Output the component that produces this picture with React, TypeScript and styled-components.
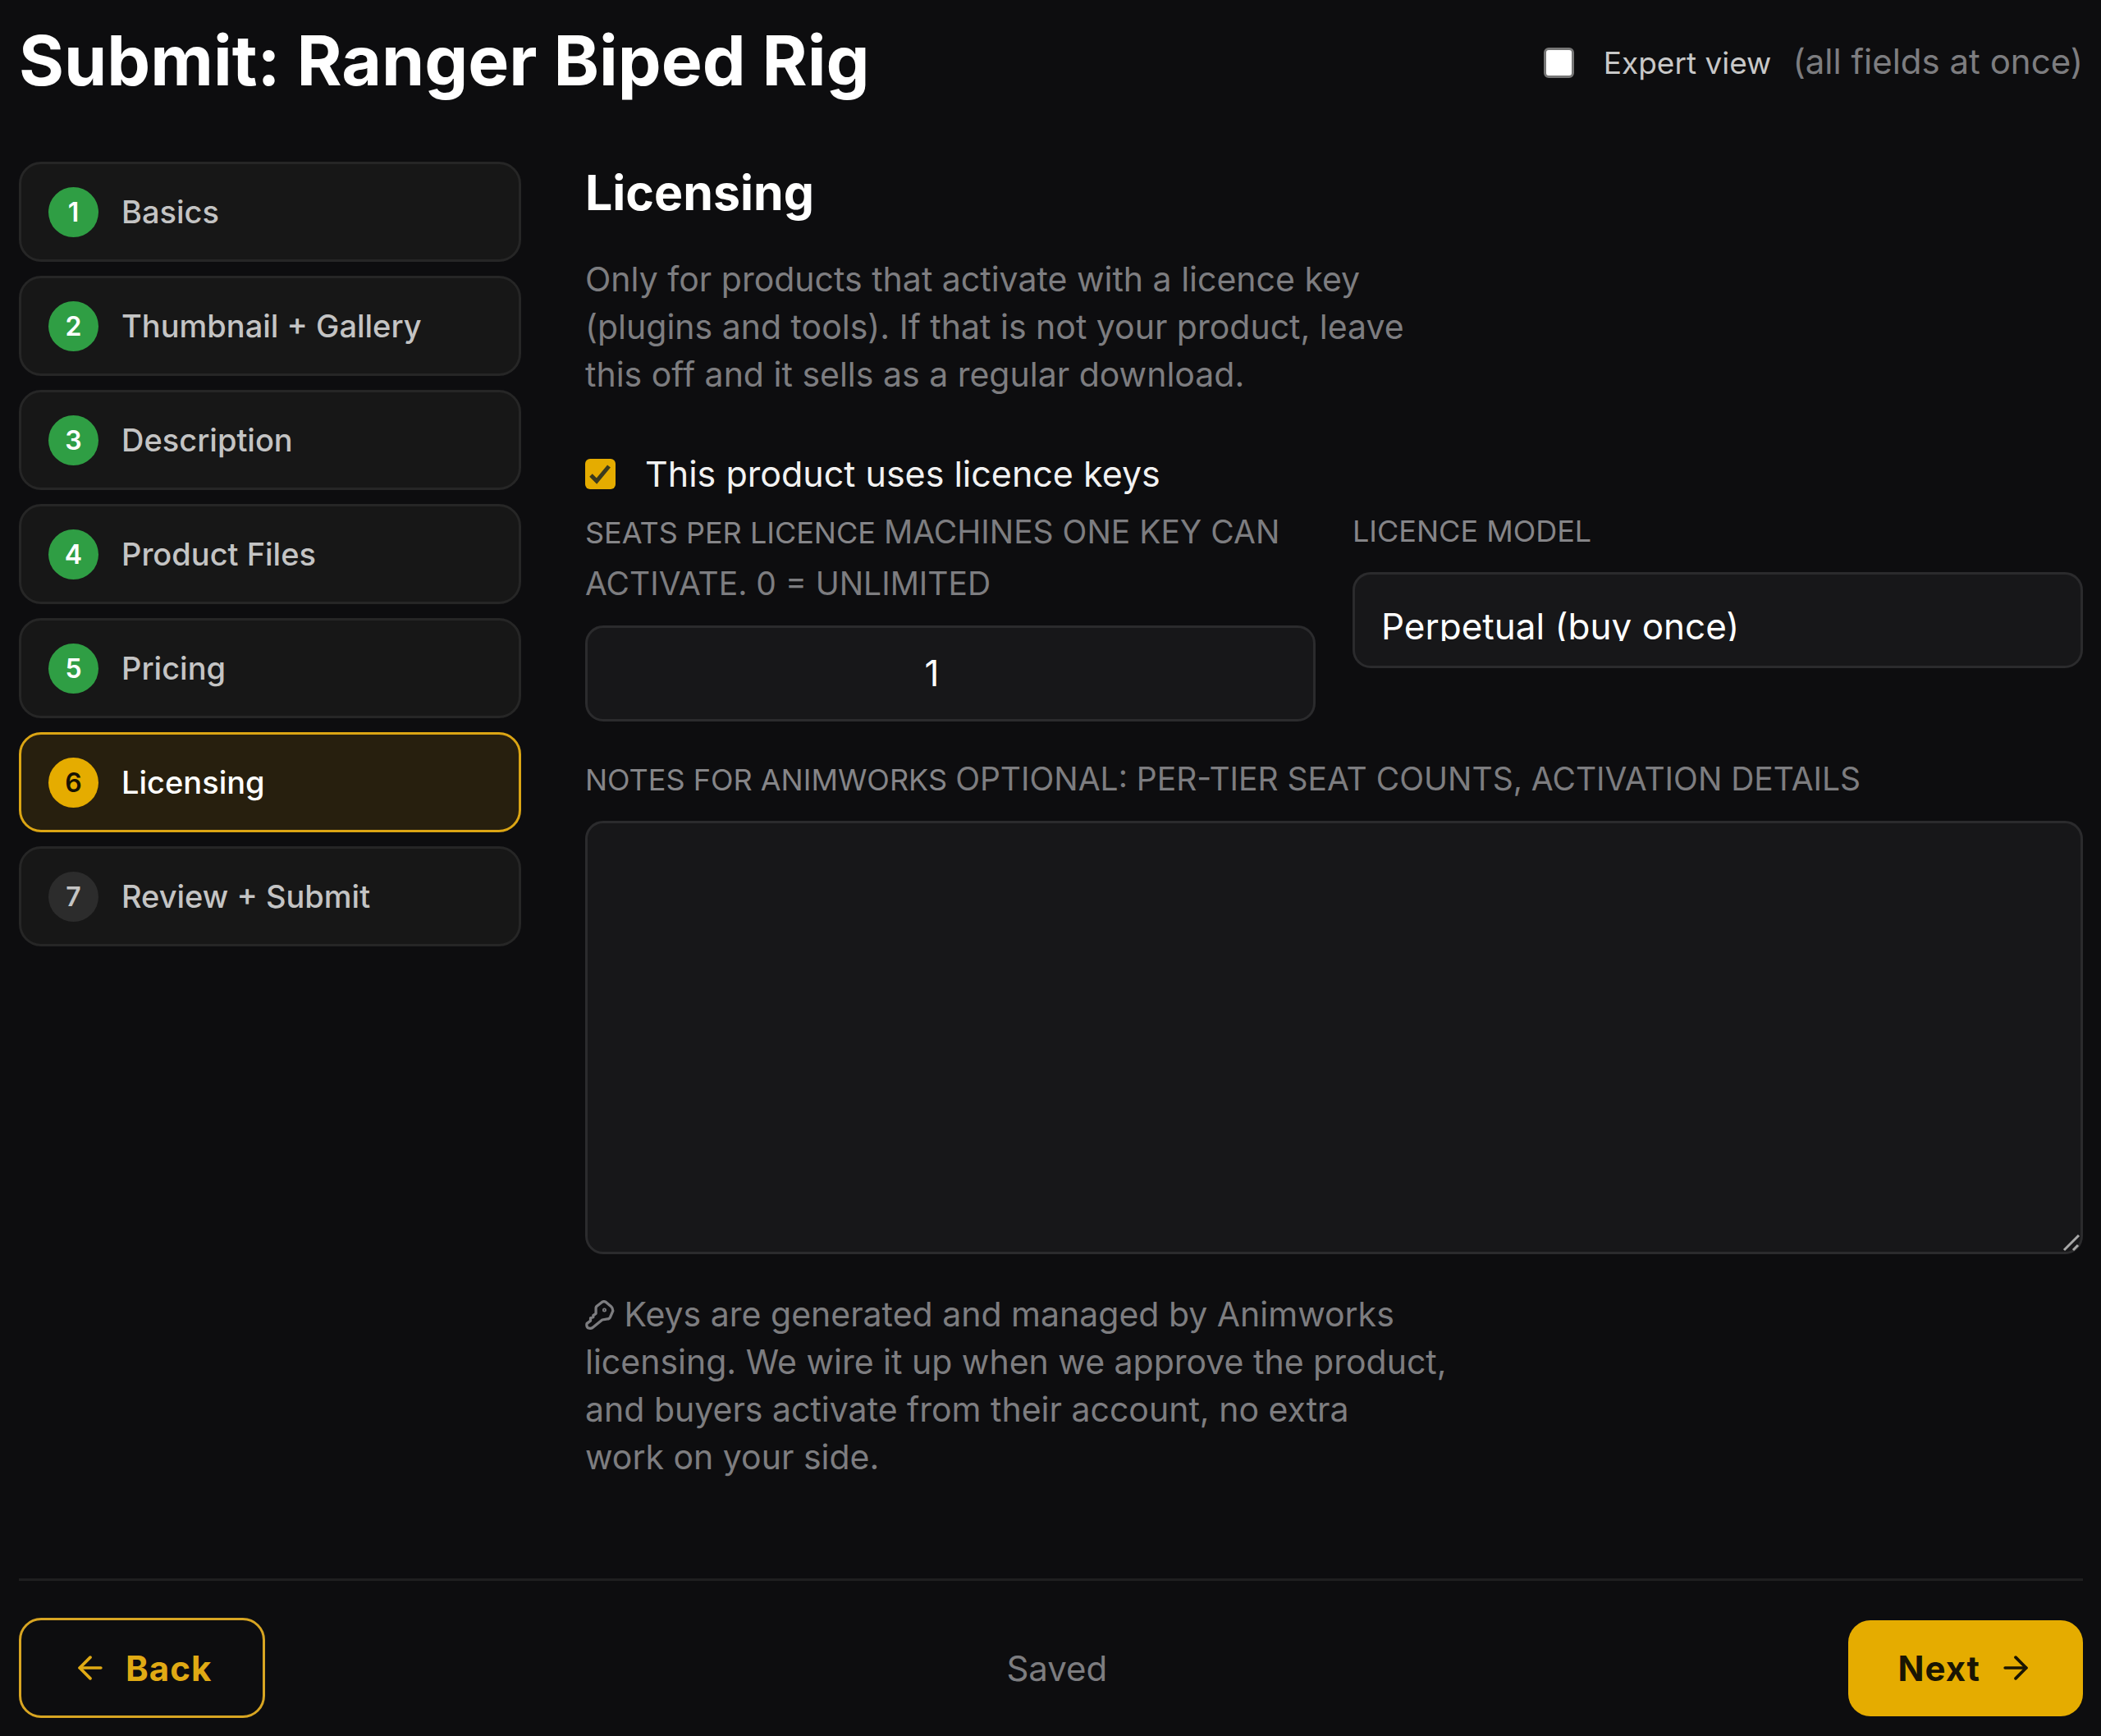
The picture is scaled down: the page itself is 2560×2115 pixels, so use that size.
import React, { useState } from "react";
import styled, { createGlobalStyle } from "styled-components";
import { ArrowLeft, ArrowRight } from "lucide-react";

const GlobalStyle = createGlobalStyle`
  *, *::before, *::after { box-sizing: border-box; }
  body {
    margin: 0;
    background: #0d0d0f;
    color: #ffffff;
    font-family: Inter, "Open Sans", "Noto Sans", sans-serif;
  }
  h1, h2, p, ol { margin: 0; padding: 0; }
  button, input, select, textarea { font-family: inherit; }
`;

const Page = styled.div`
  padding: 26px 22px 16px 23px;
`;

const Header = styled.header`
  display: flex;
  justify-content: space-between;
  align-items: center;
  height: 100px;
  margin-bottom: 71px;
`;

const Title = styled.h1`
  font-size: 84px;
  line-height: 96px;
  padding-bottom: 4px;
  font-weight: 700;
`;

const tick = `url("data:image/svg+xml,%3Csvg xmlns='http://www.w3.org/2000/svg' viewBox='0 0 37 37' fill='none' stroke='%233b3a1e' stroke-width='5'%3E%3Cpath d='M7 20l7 7L29 9'/%3E%3C/svg%3E")`;

const Check = styled.input`
  appearance: none;
  width: 37px;
  height: 37px;
  margin: 0;
  flex: none;
  border: 3px solid #767676;
  border-radius: 6px;
  background: #ffffff;

  &:checked {
    border: 0;
    background: #e5ac00 ${tick} center / 100% no-repeat;
  }
`;

const ExpertToggle = styled.label`
  display: flex;
  align-items: center;
  font-size: 37px;
  line-height: 60px;
  color: #c8c8c8;
  gap: 36px;
`;

const ExpertText = styled.span`
  display: flex;
  align-items: baseline;
  gap: 26px;
`;

const Muted = styled.span`
  font-size: 42px;
  color: #7d7d80;
`;

const Columns = styled.div`
  display: grid;
  grid-template-columns: 612px minmax(0, 1fr);
  column-gap: 78px;
`;

const Steps = styled.ol`
  list-style: none;
  display: flex;
  flex-direction: column;
  gap: 17px;
`;

const StepButton = styled.button<{ $current: boolean }>`
  display: flex;
  align-items: center;
  gap: 28px;
  width: 100%;
  height: 122px;
  padding: 0 33px;
  border: 3px solid ${(p) => (p.$current ? "#dba514" : "#262626")};
  border-radius: 27px;
  background: ${(p) => (p.$current ? "#271f0e" : "#171717")};
  color: ${(p) => (p.$current ? "#ffffff" : "#c4c4c4")};
  font-size: 38px;
  font-weight: 500;
  text-align: left;
`;

const badgeColors = {
  done: ["#2f9e44", "#ffffff"],
  current: ["#e5ac00", "#171203"],
  todo: ["#2c2c2c", "#c4c4c4"],
};

const StepBadge = styled.span<{ $state: keyof typeof badgeColors }>`
  display: flex;
  align-items: center;
  justify-content: center;
  width: 61px;
  height: 61px;
  border-radius: 50%;
  background: ${(p) => badgeColors[p.$state][0]};
  color: ${(p) => badgeColors[p.$state][1]};
  font-size: 32px;
  font-weight: 600;
`;

const Panel = styled.main`
  display: flex;
  flex-direction: column;
  align-items: stretch;
`;

const SectionTitle = styled.h2`
  font-size: 59px;
  line-height: 76px;
  font-weight: 700;
  margin-bottom: 38px;
`;

const Note = styled.p`
  max-width: 1065px;
  font-size: 41px;
  line-height: 58px;
  color: #7d7d80;
`;

const KeysToggle = styled.label`
  display: flex;
  align-items: center;
  gap: 36px;
  margin-top: 60px;
  font-size: 43px;
  line-height: 64px;
  color: #f2f2f2;
`;

const FieldRow = styled.div`
  display: grid;
  grid-template-columns: 1fr 1fr;
  column-gap: 45px;
  align-items: start;
  margin: 8px 0 39px;
`;

const Field = styled.div`
  display: flex;
  flex-direction: column;
  gap: 19px;
`;

const FieldLabel = styled.label`
  font-size: 36px;
  line-height: 61px;
  text-transform: uppercase;
  color: #858588;
`;

const Hint = styled.span`
  font-size: 39px;
  color: #7d7d80;
`;

const controlBox = `
  width: 100%;
  border: 3px solid #2b2b2d;
  border-radius: 22px;
  background: #171719;
  color: #ffffff;
  font-size: 44px;
`;

const SeatsInput = styled.input`
  ${controlBox}
  height: 117px;
  padding: 0 66px 2px 36px;
  text-align: center;
  appearance: textfield;
`;

const ModelSelect = styled.select`
  ${controlBox}
  height: 117px;
  padding: 30px 32px;
  line-height: 66px;
  appearance: none;
`;

const NotesWrap = styled.div`
  position: relative;
`;

const NotesArea = styled.textarea`
  ${controlBox}
  display: block;
  height: 528px;
  padding: 30px 33px;
  resize: vertical;

  &::-webkit-resizer {
    display: none;
  }
`;

const Grip = styled.svg`
  position: absolute;
  right: 3px;
  bottom: 3px;
  width: 24px;
  height: 24px;
  pointer-events: none;
`;

const KeysNote = styled(Note)`
  margin-top: 44px;
`;

const KeyIcon = styled.svg`
  width: 36px;
  height: 36px;
  vertical-align: -4px;
`;

const Footer = styled.footer`
  display: flex;
  align-items: center;
  justify-content: space-between;
  margin-top: 119px;
  padding-top: 45px;
  border-top: 3px solid #1f1f20;
`;

const NavButton = styled.button<{ $primary?: boolean }>`
  display: flex;
  align-items: center;
  gap: 21px;
  height: ${(p) => (p.$primary ? 117 : 122)}px;
  padding: 0 ${(p) => (p.$primary ? 60 : 62)}px;
  border: ${(p) => (p.$primary ? "0" : "3px solid #d8a522")};
  border-radius: 27px;
  background: ${(p) => (p.$primary ? "#e5ac00" : "transparent")};
  color: ${(p) => (p.$primary ? "#1a1503" : "#e0aa14")};
  font-size: 42px;
  font-weight: 700;
  letter-spacing: 1px;
`;

const Status = styled.span`
  font-size: 42px;
  color: #7d7d80;
`;

const steps = ["Basics", "Thumbnail + Gallery", "Description", "Product Files", "Pricing", "Licensing", "Review + Submit"];
const current = 5;

export default function App() {
  const [expert, setExpert] = useState(false);
  const [usesKeys, setUsesKeys] = useState(true);

  return (
    <Page>
      <GlobalStyle />
      <Header>
        <Title>Submit: Ranger Biped Rig</Title>
        <ExpertToggle>
          <Check type="checkbox" checked={expert} onChange={(e) => setExpert(e.target.checked)} />
          <ExpertText>
            Expert view <Muted>(all fields at once)</Muted>
          </ExpertText>
        </ExpertToggle>
      </Header>
      <Columns>
        <nav aria-label="Steps">
          <Steps>
            {steps.map((name, i) => (
              <li key={name}>
                <StepButton type="button" $current={i === current}>
                  <StepBadge $state={i < current ? "done" : i === current ? "current" : "todo"}>{i + 1}</StepBadge>
                  {name}
                </StepButton>
              </li>
            ))}
          </Steps>
        </nav>
        <Panel>
          <SectionTitle>Licensing</SectionTitle>
          <Note>
            Only for products that activate with a licence key (plugins and tools). If that is not your product, leave
            this off and it sells as a regular download.
          </Note>
          <KeysToggle>
            <Check type="checkbox" checked={usesKeys} onChange={(e) => setUsesKeys(e.target.checked)} />
            This product uses licence keys
          </KeysToggle>
          <FieldRow>
            <Field>
              <FieldLabel htmlFor="seats">
                Seats per licence <Hint>machines one key can activate. 0 = unlimited</Hint>
              </FieldLabel>
              <SeatsInput id="seats" type="number" defaultValue={1} />
            </Field>
            <Field>
              <FieldLabel htmlFor="model">Licence model</FieldLabel>
              <ModelSelect id="model">
                <option>Perpetual (buy once)</option>
              </ModelSelect>
            </Field>
          </FieldRow>
          <Field>
            <FieldLabel htmlFor="notes">
              Notes for Animworks <Hint>optional: per-tier seat counts, activation details</Hint>
            </FieldLabel>
            <NotesWrap>
              <NotesArea id="notes" />
              <Grip viewBox="0 0 24 24" stroke="#a8a8a8" strokeWidth="3" aria-hidden="true">
                <path d="M4 22 L22 4 M15 22 L21 16" />
              </Grip>
            </NotesWrap>
          </Field>
          <KeysNote>
            <KeyIcon
              viewBox="0 0 33 33"
              fill="none"
              stroke="currentColor"
              strokeWidth="3"
              strokeLinejoin="round"
              strokeLinecap="round"
              aria-hidden="true"
            >
              <path d="M19 2 Q21 1 23 2 L29 7 Q31 9 31 12 L28 19 Q27 21 25 21 L19 22 L8 31 Q6 32 3 31 Q1 29 2 26 L6 23 L6 20 L9 19 L9 17 L12 15 L12 9 Q12 7 14 6 Z" />
              <circle cx="21.5" cy="11" r="0.8" />
            </KeyIcon>{" "}
            Keys are generated and managed by Animworks licensing. We wire it up when we approve the product, and buyers
            activate from their account, no extra work&nbsp;on your side.
          </KeysNote>
        </Panel>
      </Columns>
      <Footer>
        <NavButton type="button">
          <ArrowLeft size={44} />
          Back
        </NavButton>
        <Status>Saved</Status>
        <NavButton type="button" $primary>
          Next
          <ArrowRight size={44} />
        </NavButton>
      </Footer>
    </Page>
  );
}
